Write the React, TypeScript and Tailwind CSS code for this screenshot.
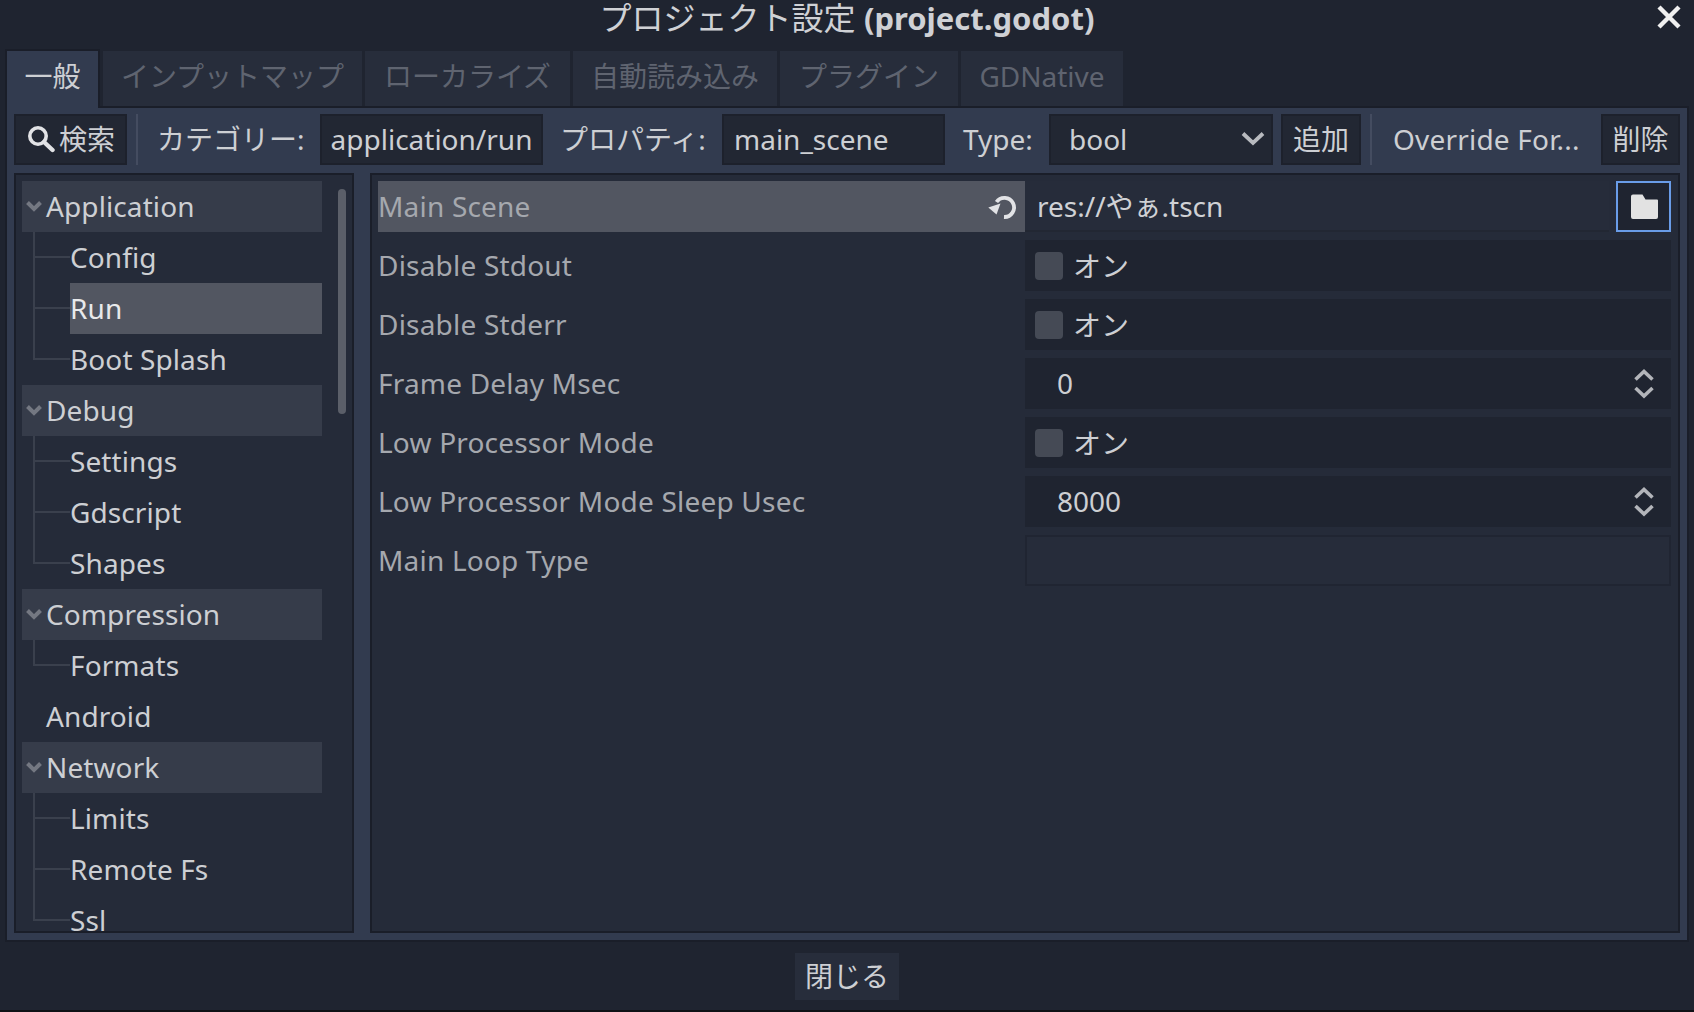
import type { ReactNode } from "react";

const tabs = [
  { label: "一般", w: "w-[95px]" },
  { label: "インプットマップ", w: "w-[259px]" },
  { label: "ローカライズ", w: "w-[205px]" },
  { label: "自動読み込み", w: "w-[204px]" },
  { label: "プラグイン", w: "w-[178px]" },
  { label: "GDNative", w: "w-[162px]" },
];

const tree = [
  { label: "Application", open: true, children: ["Config", "Run", "Boot Splash"] },
  { label: "Debug", open: true, children: ["Settings", "Gdscript", "Shapes"] },
  { label: "Compression", open: true, children: ["Formats"] },
  { label: "Android", open: false, children: [] },
  { label: "Network", open: true, children: ["Limits", "Remote Fs", "Ssl"] },
];

function Chevron() {
  return (
    <svg width="16" height="11" viewBox="0 0 16 11" className="ml-[4px] mr-[4px] mt-[2px]">
      <path d="M1.5 1.5 8 8 14.5 1.5" fill="none" stroke="#747882" strokeWidth="4" />
    </svg>
  );
}

function TreeChild({ label, last, selected }: { label: string; last: boolean; selected: boolean }) {
  return (
    <div className="flex h-[51px] shrink-0">
      <div className="ml-[11px] flex w-[37px] shrink-0 flex-col">
        <div className="h-[26px] border-b-2 border-l-2 border-[#3a404d]" />
        {!last && <div className="flex-1 border-l-2 border-[#3a404d]" />}
      </div>
      <div className={"flex flex-1 items-center pb-[2px] " + (selected ? "bg-[#525661] text-[#e8e9eb]" : "")}>{label}</div>
    </div>
  );
}

function Tree() {
  return (
    <div className="flex w-[340px] shrink-0 overflow-hidden border-2 border-[#1a1e29] bg-[#252b39] pl-[6px] pr-[5px] pt-[6px] tracking-[0.1px]">
      <div className="flex w-[300px] shrink-0 flex-col">
        {tree.map((group) => (
          <div key={group.label} className="flex shrink-0 flex-col">
            {group.open ? (
              <div className="flex h-[51px] items-center bg-[#363c4a] pb-[2px]">
                <Chevron />
                <span>{group.label}</span>
              </div>
            ) : (
              <div className="flex h-[51px] items-center pb-[2px] pl-[24px]">{group.label}</div>
            )}
            {group.children.map((child, i) => (
              <TreeChild
                key={child}
                label={child}
                last={i === group.children.length - 1}
                selected={child === "Run"}
              />
            ))}
          </div>
        ))}
      </div>
      <div className="ml-[16px] mt-[8px] h-[225px] w-[8px] shrink-0 rounded-full bg-[#5b5f69]" />
    </div>
  );
}

function Checkbox() {
  return (
    <div className="flex h-full items-center bg-[#1f2430] pl-[10px]">
      <div className="h-[28px] w-[28px] rounded-[4px] bg-[#454a55]" />
      <span className="ml-[10px]">オン</span>
    </div>
  );
}

function SpinValue({ value }: { value: string }) {
  return (
    <div className="flex h-full items-center justify-between bg-[#1f2430] pl-[32px] pr-[17px]">
      <span className="pb-[2px]">{value}</span>
      <svg width="20" height="30" viewBox="0 0 20 30">
        <path d="M1.5 10.5 10 2.5 18.5 10.5M1.5 19 10 27 18.5 19" fill="none" stroke="#b3b5ba" strokeWidth="3.6" />
      </svg>
    </div>
  );
}

function PropRow({ label, children }: { label: string; children: ReactNode }) {
  return (
    <div className="mb-[8px] flex h-[51px] shrink-0">
      <div className="flex w-[647px] shrink-0 items-center pb-[2px] tracking-[0.2px] text-[#a5a8ae]">{label}</div>
      <div className="flex-1">{children}</div>
    </div>
  );
}

function MainSceneRow() {
  return (
    <div className="mb-[8px] flex h-[51px] shrink-0">
      <div className="flex w-[647px] shrink-0 items-center justify-between bg-[#525661] pr-[7px] text-[#a5a8ae]">
        <span className="pb-[2px] tracking-[0.2px]">Main Scene</span>
        <svg width="30" height="30" viewBox="0 0 30 30" className="mt-[2px]">
          <path d="M8.5 9a9.6 9.6 0 1 1 7.5 15" fill="none" stroke="#e2e3e6" strokeWidth="3.8" />
          <path d="M0.3 14.5 12.5 10.5 8.5 21.5z" fill="#e2e3e6" />
        </svg>
      </div>
      <div className="flex flex-1">
        <div className="flex w-[584px] shrink-0 items-center border-b-2 border-[#222733] bg-[#262c3a] pl-[12px] text-[#cfd1d5]">
          res://やぁ.tscn
        </div>
        <div className="ml-[7px] flex flex-1 items-center justify-center border-2 border-[#699ce8] bg-[#1f2430]">
          <svg width="28" height="26" viewBox="0 0 28 26">
            <path d="M1 2.5a2 2 0 0 1 2-2h9.5l3 5H27a1 1 0 0 1 1 1V23a2 2 0 0 1-2 2H3a2 2 0 0 1-2-2z" fill="#e2e2e2" />
          </svg>
        </div>
      </div>
    </div>
  );
}

function Properties() {
  return (
    <div className="ml-[16px] flex flex-1 flex-col border-2 border-[#1a1e29] bg-[#252b39] pl-[6px] pr-[7px] pt-[6px]">
      <MainSceneRow />
      <PropRow label="Disable Stdout"><Checkbox /></PropRow>
      <PropRow label="Disable Stderr"><Checkbox /></PropRow>
      <PropRow label="Frame Delay Msec"><SpinValue value="0" /></PropRow>
      <PropRow label="Low Processor Mode"><Checkbox /></PropRow>
      <PropRow label="Low Processor Mode Sleep Usec"><SpinValue value="8000" /></PropRow>
      <PropRow label="Main Loop Type">
        <div className="h-full border-2 border-[#202532] bg-[#262c3a]" />
      </PropRow>
    </div>
  );
}

function ToolButton({ className, children }: { className: string; children: ReactNode }) {
  return (
    <div className={"flex h-[51px] shrink-0 items-center justify-center border-2 border-[#1d212c] bg-[#222733] pb-[2px] " + className}>
      {children}
    </div>
  );
}

function Separator() {
  return <div className="h-[51px] w-[2px] shrink-0 bg-[#444c60]" />;
}

function Toolbar() {
  return (
    <div className="mt-[6px] flex h-[51px] shrink-0 items-center">
      <ToolButton className="w-[113px] !justify-start pl-[11px]">
        <svg width="28" height="28" viewBox="0 0 28 28" className="mr-[4px]">
          <circle cx="11" cy="11" r="8.2" fill="none" stroke="#e2e3e6" strokeWidth="3.6" />
          <path d="M17 17 25.5 25" stroke="#e2e3e6" strokeWidth="4.4" strokeLinecap="round" />
        </svg>
        検索
      </ToolButton>
      <div className="ml-[9px]"><Separator /></div>
      <span className="ml-[19px] w-[163px] shrink-0 pb-[2px]">カテゴリー:</span>
      <ToolButton className="w-[223px]">application/run</ToolButton>
      <span className="w-[179px] shrink-0 pb-[2px] pl-[17px]">プロパティ:</span>
      <ToolButton className="w-[223px] !justify-start pl-[10px]">main_scene</ToolButton>
      <span className="w-[104px] shrink-0 pb-[2px] pl-[18px]">Type:</span>
      <ToolButton className="w-[224px] !justify-between pl-[18px] pr-[6px]">
        <span>bool</span>
        <svg width="24" height="15" viewBox="0 0 24 15">
          <path d="M2 2.5 12 12 22 2.5" fill="none" stroke="#b8babf" strokeWidth="3.8" />
        </svg>
      </ToolButton>
      <ToolButton className="ml-[8px] w-[80px]">追加</ToolButton>
      <div className="ml-[9px]"><Separator /></div>
      <span className="ml-[21px] w-[208px] shrink-0 pb-[2px] tracking-[0.2px]">Override For...</span>
      <ToolButton className="w-[79px]">削除</ToolButton>
    </div>
  );
}

export default function App() {
  return (
    <div className="flex h-[1012px] w-[1694px] flex-col overflow-hidden bg-[#1f2430] font-['Noto_Sans','Noto_Sans_CJK_JP',sans-serif] text-[28px] leading-[38px] text-[#cdcfd3]">
      <div className="relative flex h-[36px] shrink-0 items-center justify-center text-[#cfd1d5]">
        <span className="text-[32px] leading-[36px]">
          プロジェクト設定 <span className="text-[31px] leading-[36px] font-bold">(project.godot)</span>
        </span>
        <svg width="26" height="26" viewBox="0 0 26 26" className="absolute right-[12px] top-[4px]">
          <path d="M3 3 23 23M23 3 3 23" stroke="#f0f0f0" strokeWidth="4.4" />
        </svg>
      </div>

      <div className="ml-[5px] mt-[15px] flex h-[55px] shrink-0 gap-[3px]">
        {tabs.map((tab, i) => (
          <div
            key={tab.label}
            className={
              "flex items-center justify-center " +
              tab.w +
              (i === 0
                ? " relative z-10 -mt-[2px] h-[59px] border-x-2 border-t-2 border-[#1a1e29] bg-[#323b4f] pb-[8px] text-[#cdcfd3]"
                : " bg-[#272d3b] pb-[6px] text-[#5f6470]")
            }
          >
            {tab.label}
          </div>
        ))}
      </div>

      <div className="mx-[5px] flex h-[836px] shrink-0 flex-col border-2 border-[#1a1e29] bg-[#323b4f] pb-[7px] pl-[7px] pr-[7px]">
        <Toolbar />
        <div className="mt-[8px] flex min-h-0 flex-1">
          <Tree />
          <Properties />
        </div>
      </div>

      <div className="flex flex-1 justify-center pt-[11px]">
        <div className="flex h-[47px] w-[104px] items-center justify-center bg-[#272d3b] pb-[2px]">閉じる</div>
      </div>
      <div className="h-[2px] shrink-0 bg-[#0f1116]" />
    </div>
  );
}
